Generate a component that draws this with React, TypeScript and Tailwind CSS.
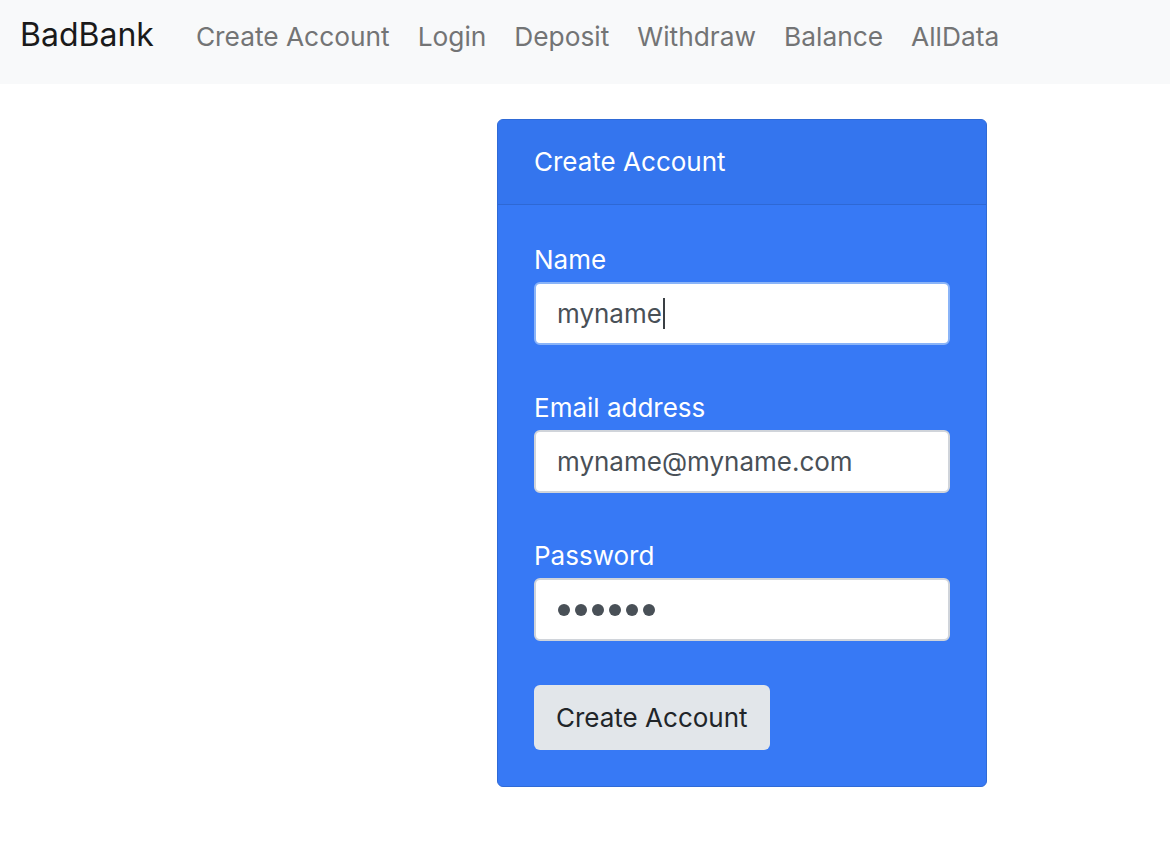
import React from 'react';

const links = ['Create Account', 'Login', 'Deposit', 'Withdraw', 'Balance', 'AllData'];

function Field({ label, children, focused }: { label: string; children: React.ReactNode; focused?: boolean }) {
  return (
    <div className="flex flex-col">
      <label className="text-[26px] leading-[36px] text-white">{label}</label>
      <div
        className={
          'mt-[4px] h-[63px] flex items-center rounded-[6px] bg-white px-[21px] text-[26px] text-[#495057] border-2 ' +
          (focused ? 'border-[#8ab4f8]' : 'border-[#d0d4da]')
        }
      >
        {children}
      </div>
    </div>
  );
}

export default function App() {
  return (
    <div className="min-h-screen bg-white font-['Inter','Liberation_Sans',sans-serif]">
      <nav className="h-[84px] bg-[#f8f9fa] flex items-start pt-[13px] pl-[20px]">
        <span className="text-[32px] leading-[44px] text-[#1a1a1a] mr-[42px]">BadBank</span>
        <ul className="flex gap-[28px] pt-[2px]">
          {links.map((l) => (
            <li key={l} className="text-[26.3px] leading-[44px] text-[#737475]">
              {l}
            </li>
          ))}
        </ul>
      </nav>

      <div className="flex pl-[497px] pt-[35px]">
        <div className="w-[490px] rounded-[6px] border border-[#2f6ad6] bg-[#3779f5] overflow-hidden">
          <div className="h-[85px] flex items-center px-[36px] pb-[2px] bg-[#3475ee] border-b border-[#2e68d4] text-[26px] text-white">
            Create Account
          </div>
          <div className="flex flex-col gap-[45px] px-[36px] pt-[37px] pb-[36px]">
            <Field label="Name" focused>
              <span>myname</span>
              <span className="ml-[1px] w-[2px] h-[31px] bg-[#3a3f44]" />
            </Field>
            <Field label="Email address">
              <span>myname@myname.com</span>
            </Field>
            <Field label="Password">
              <span className="flex gap-[5px] pl-[1px]" aria-label="password">
                {[0, 1, 2, 3, 4, 5].map((i) => (
                  <span key={i} className="w-[12px] h-[12px] rounded-full bg-[#495057]" />
                ))}
              </span>
            </Field>
            <div className="-mt-[1px]">
              <button className="h-[65px] px-[22px] rounded-[6px] bg-[#e2e6ea] text-[26px] text-[#212529]">
                Create Account
              </button>
            </div>
          </div>
        </div>
      </div>
    </div>
  );
}
